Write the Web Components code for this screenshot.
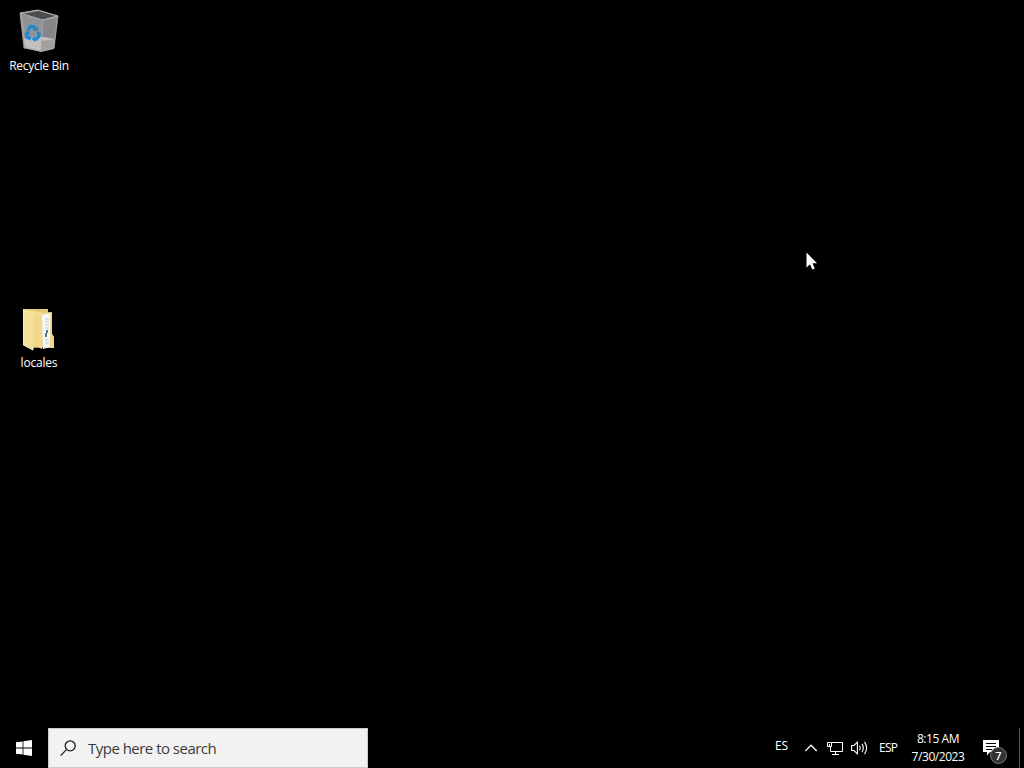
<!DOCTYPE html>
<html lang="en">
<head>
<meta charset="utf-8">
<title>Desktop</title>
<style>
    body {
        margin: 0;
        background: #000;
        color: #fff;
        font-family: "Open Sans", "Noto Sans", sans-serif;
        font-size: 12px;
    }
    svg { display: block; }
</style>
</head>
<body>
<win-desktop>
    <desktop-icon style="--x: 0px; --y: 8px">
        <svg width="42" height="46" viewBox="0 0 42 46">
            <path d="M2 5 20 2 40 8 36 41 23 44 6 40Z" fill="#a0a2a4"/>
            <path d="M3 6 21 3 38 8 24 12Z" fill="#4b4e50"/>
            <path d="M4 7 24 13 23 33 7 30Z" fill="#919496"/>
            <path d="M24 13 39 9 37 31 23 33Z" fill="#85888a"/>
            <path d="M6 31 20 28 37 31 36 40 23 43 7 39Z" fill="#c4c0c0"/>
            <path d="M23 33 37 31 36 40 23 43Z" fill="#a39f9f"/>
            <path d="M2 5 20 2 40 8 25 12Z" fill="none" stroke="#aeb0b2"/>
            <path d="M2 5 6 40 23 43 25 12M40 8 36 40 23 43" fill="none" stroke="#a8aaac" stroke-width=".8"/>
            <g fill="none" stroke="#2388cf" stroke-width="3.400">
                <path d="M10 22.500 12 18.500 15.500 18.500 17.500 21.500"/>
                <path d="M20.500 24 21 28 18.500 31 16 31"/>
                <path d="M13 30.500 9.500 29.500 8.500 27 10 24.500"/>
            </g>
            <path d="M14.500 22 20 23.500 20 18.500ZM17 28 13.500 31 17 34ZM6.500 25.500 10 22.500 12.500 26.500Z" fill="#2388cf"/>
        </svg>
        <span slot="label">Recycle Bin</span>
    </desktop-icon>
    <desktop-icon style="--x: 0px; --y: 305px">
        <svg width="42" height="46" viewBox="-1 0 42 46">
            <path d="M4 4H29V42L12 43 4 40Z" fill="#e5c97a"/>
            <path d="M14 8 33 7V29L35 32V42L29 43 14 41Z" fill="#edd58a"/>
            <path d="M23 10 31 8V42L24 44Z" fill="#f5f7f8"/>
            <path d="M26 14H30M26 17H30M26 20H30M26 23H30M26 35H30M26 38H30" stroke="#bdc9d3"/>
            <path d="M28 25V28M27 28V32" fill="none" stroke="#55789a" stroke-width="2"/>
            <path d="M31 8H33V29L35 32V43H31Z" fill="#efd88e"/>
            <path d="M4 4 23 8V43L14 40V45L4 40Z" fill="#f5e09a"/>
            <path d="M14 8 23 10V44L14 40Z" fill="#f1d88c"/>
            <path d="M4.500 4V40L14 45V41" fill="none" stroke="#fbecb9"/>
        </svg>
        <span slot="label" style="letter-spacing: -.2px">locales</span>
    </desktop-icon>
    <mouse-pointer></mouse-pointer>
    <task-bar slot="taskbar">
        <start-button></start-button>
        <search-box>Type here to search</search-box>
        <system-tray slot="tray">
            <span slot="lang">ES</span>
            <span slot="keyboard">ESP</span>
            <span slot="time">8:15 AM</span>
            <span slot="date">7/30/2023</span>
            <span slot="count">7</span>
        </system-tray>
    </task-bar>
</win-desktop>

<script>
class BaseElement extends HTMLElement {
    constructor() {
        super();
        this.attachShadow({mode: 'open'});
    }
    connectedCallback() {
        const template = document.createElement('template');
        template.innerHTML = this.getTemplate() + `<style>${this.getStyles()}</style>`;
        this.shadowRoot.replaceChildren(template.content.cloneNode(true));
    }
}

class WinDesktop extends BaseElement {
    getTemplate() {
        return `<main><slot></slot></main><slot name="taskbar"></slot>`;
    }
    getStyles() {
        return `
            :host {
                display: flex;
                flex-direction: column;
                height: 100vh;
                overflow: hidden;
                background: #000;
                cursor: default;
            }
            main {
                position: relative;
                flex: 1;
            }`;
    }
}
customElements.define('win-desktop', WinDesktop);

class DesktopIcon extends BaseElement {
    getTemplate() {
        return `<slot></slot><div class="label"><slot name="label"></slot></div>`;
    }
    getStyles() {
        return `
            :host {
                position: absolute;
                left: var(--x);
                top: var(--y);
                width: 78px;
                display: flex;
                flex-direction: column;
                align-items: center;
            }
            .label {
                margin-top: 4px;
                line-height: 16px;
                white-space: nowrap;
                letter-spacing: -.27px;
            }`;
    }
}
customElements.define('desktop-icon', DesktopIcon);

class MousePointer extends BaseElement {
    getTemplate() {
        return `
            <svg width="12" height="19" viewBox="0 0 12 19">
                <path d="M.5 .5V15.500L4 12.300 6.300 17.500 8.800 16.500 6.500 11.300H11Z" fill="#fff"/>
            </svg>`;
    }
    getStyles() {
        return `
            :host {
                position: absolute;
                left: 806px;
                top: 252px;
            }
            svg { display: block; }`;
    }
}
customElements.define('mouse-pointer', MousePointer);

class TaskBar extends BaseElement {
    getTemplate() {
        return `<slot></slot><div class="space"></div><slot name="tray"></slot>`;
    }
    getStyles() {
        return `
            :host {
                display: flex;
                height: 40px;
                background: #000;
            }
            .space { flex: 1; }`;
    }
}
customElements.define('task-bar', TaskBar);

class StartButton extends BaseElement {
    getTemplate() {
        return `
            <svg width="16" height="16" viewBox="0 0 16 16" fill="#fff">
                <path d="M0 2.300 6.600 1.400V7.500H0ZM7.400 1.300 16 0V7.500H7.400ZM0 8.400H6.600V14.600L0 13.700ZM7.400 8.400H16V16L7.400 14.700Z"/>
            </svg>`;
    }
    getStyles() {
        return `
            :host {
                display: flex;
                width: 48px;
                align-items: center;
                justify-content: center;
            }`;
    }
}
customElements.define('start-button', StartButton);

class SearchBox extends BaseElement {
    getTemplate() {
        return `
            <svg width="17" height="17" viewBox="0 0 17 17" fill="none" stroke="#1c1c1c" stroke-width="1.300">
                <circle cx="10.200" cy="5.800" r="5"/>
                <path d="M6.600 9.400.700 15.600"/>
            </svg>
            <span><slot></slot></span>`;
    }
    getStyles() {
        return `
            :host {
                display: flex;
                align-items: center;
                box-sizing: border-box;
                width: 320px;
                padding-left: 11px;
                background: #f2f2f2;
                border: 1px solid #ccc;
                color: #3b3b3b;
                font-size: 15px;
            }
            span {
                margin-left: 11px;
                white-space: nowrap;
                letter-spacing: -.52px;
            }`;
    }
}
customElements.define('search-box', SearchBox);

class SystemTray extends BaseElement {
    getTemplate() {
        return `
            <div class="lang"><slot name="lang"></slot></div>
            <svg class="chevron" width="13" height="8" viewBox="0 0 13 8" fill="none" stroke="#fff" stroke-width="1.300">
                <path d="M.300 7 6 1.200 11.700 7"/>
            </svg>
            <svg class="network" width="17" height="14" viewBox="0 0 17 14" fill="none" stroke="#fff">
                <path d="M5 1.500H15.500V10.500H3.500V5M8.500 10.500V13M5 13.500H12"/>
                <path d="M.500 1.500H4.500V5.500H.500ZM2.500 3V6"/>
            </svg>
            <svg class="volume" width="17" height="14" viewBox="0 0 17 14" fill="none" stroke="#fff" stroke-width="1.100">
                <path d="M.600 4.500H3L6.400 1.200V12.800L3 9.500H.600Z"/>
                <path d="M8.500 4.700Q10 7 8.500 9.300M11 2.900Q13.600 7 11 11.100M13.500.900Q17.700 7 13.500 13.100"/>
            </svg>
            <div class="keyboard"><slot name="keyboard"></slot></div>
            <div class="clock"><slot name="time"></slot><slot name="date"></slot></div>
            <div class="actions">
                <svg width="16" height="16" viewBox="0 0 16 16">
                    <path d="M0 0H16V12H7L4 15.500V12H0Z" fill="#fff"/>
                    <path d="M3 3.500H13M3 6.500H13M3 9.500H9" stroke="#000"/>
                </svg>
                <div class="badge"><slot name="count"></slot></div>
            </div>
            <div class="peek"></div>`;
    }
    getStyles() {
        return `
            :host {
                display: flex;
                align-items: center;
                width: 249px;
                white-space: nowrap;
            }
            svg {
                display: block;
                flex: none;
            }
            .lang {
                width: 30px;
                margin-bottom: 5px;
                letter-spacing: -.1px;
            }
            .chevron { margin-bottom: 1px; }
            .network { margin-left: 9px; }
            .volume { margin-left: 7px; }
            .keyboard {
                width: 22px;
                margin: 0 0 1px 11px;
                letter-spacing: -.7px;
            }
            .clock {
                display: flex;
                flex-direction: column;
                align-items: center;
                width: 58px;
                margin-left: 8px;
                line-height: 18px;
                letter-spacing: -.45px;
            }
            .actions {
                position: relative;
                margin-left: 16px;
            }
            .badge {
                position: absolute;
                left: 7px;
                top: 7px;
                width: 17px;
                height: 17px;
                box-sizing: border-box;
                border: 1px solid #777;
                border-radius: 50%;
                background: #333;
                font-size: 11px;
                font-weight: 600;
                line-height: 15px;
                text-align: center;
            }
            .peek {
                align-self: stretch;
                width: 4px;
                margin-left: auto;
                border-left: 1px solid #555;
            }`;
    }
}
customElements.define('system-tray', SystemTray);
</script>
</body>
</html>
